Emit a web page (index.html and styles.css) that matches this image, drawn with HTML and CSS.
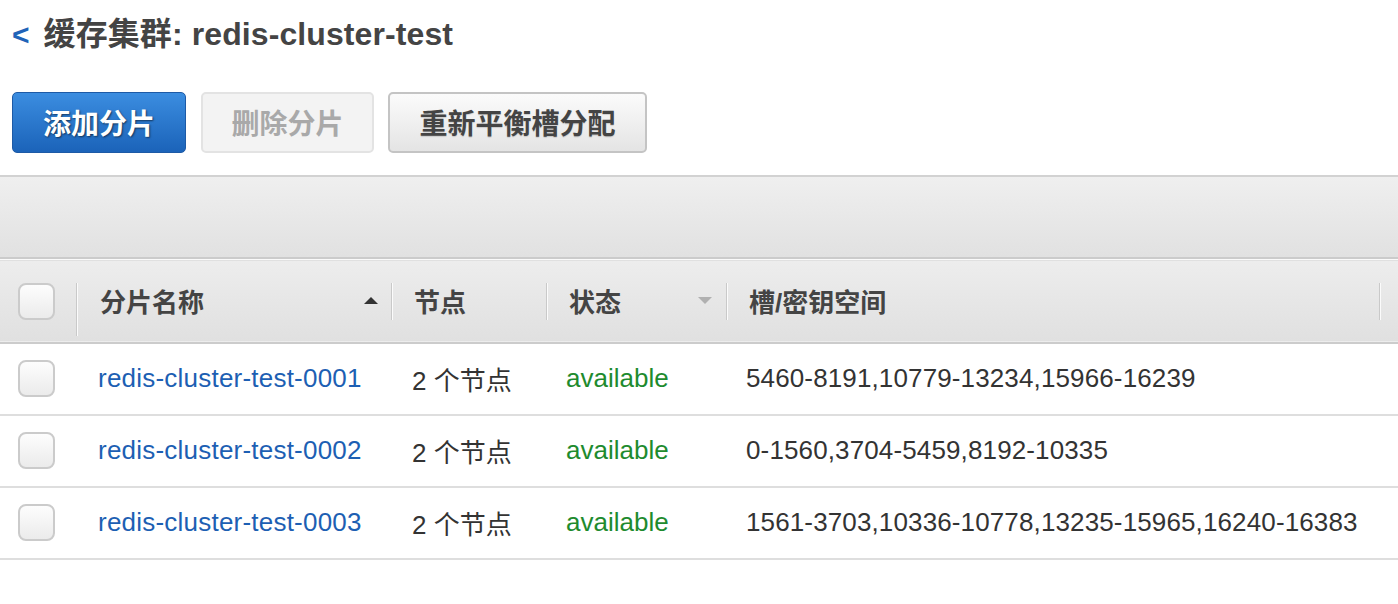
FILE: index.html
```html
<!DOCTYPE html>
<html lang="zh-CN">
<head>
<meta charset="utf-8">
<title>缓存集群: redis-cluster-test</title>
<link rel="stylesheet" href="styles.css">
</head>
<body>
<div class="title"><span class="back">&lt;</span><h1>缓存集群: redis-cluster-test</h1></div>
<div class="actions">
  <button class="btn btn-primary">添加分片</button>
  <button class="btn btn-disabled" disabled>删除分片</button>
  <button class="btn btn-default">重新平衡槽分配</button>
</div>
<div class="toolbar"></div>
<table class="grid">
  <colgroup>
    <col class="c-check"><col class="c-name"><col class="c-node"><col class="c-status"><col class="c-slots"><col class="c-end">
  </colgroup>
  <thead>
    <tr>
      <th class="th-check"><span class="cb"></span><span class="sep sep-long"></span></th>
      <th><div class="th-in"><span>分片名称</span><span class="arrow-up"></span></div><span class="sep"></span></th>
      <th><div class="th-in"><span>节点</span></div><span class="sep"></span></th>
      <th><div class="th-in"><span>状态</span><span class="arrow-down"></span></div><span class="sep"></span></th>
      <th><div class="th-in"><span>槽/密钥空间</span></div><span class="sep"></span></th>
      <th class="th-end"><span class="sep"></span></th>
    </tr>
  </thead>
  <tbody>
    <tr>
      <td class="td-check"><span class="cb"></span></td>
      <td class="link">redis-cluster-test-0001</td>
      <td>2 个节点</td>
      <td class="ok">available</td>
      <td class="slots">5460-8191,10779-13234,15966-16239</td>
      <td></td>
    </tr>
    <tr>
      <td class="td-check"><span class="cb"></span></td>
      <td class="link">redis-cluster-test-0002</td>
      <td>2 个节点</td>
      <td class="ok">available</td>
      <td class="slots">0-1560,3704-5459,8192-10335</td>
      <td></td>
    </tr>
    <tr>
      <td class="td-check"><span class="cb"></span></td>
      <td class="link">redis-cluster-test-0003</td>
      <td>2 个节点</td>
      <td class="ok">available</td>
      <td class="slots">1561-3703,10336-10778,13235-15965,16240-16383</td>
      <td></td>
    </tr>
  </tbody>
</table>
</body>
</html>
```
FILE: styles.css
```css
* { box-sizing: border-box; }
html, body { margin: 0; padding: 0; background: #fff; }
body {
  font-family: "Liberation Sans", "Noto Sans CJK SC", sans-serif;
  color: #444;
  width: 1398px;
  overflow: hidden;
}
.title {
  display: flex;
  align-items: center;
  height: 40px;
  margin-top: 14px;
  padding-left: 12px;
}
.back {
  color: #1f63b8;
  font-weight: bold;
  font-size: 30px;
  line-height: 40px;
  margin-right: 14px;
  margin-top: 2px;
}
.title h1 {
  margin: 0;
  font-size: 32px;
  line-height: 40px;
  font-weight: bold;
  color: #444;
  letter-spacing: 0.1px;
}
.actions {
  display: flex;
  gap: 15px;
  padding-left: 12px;
  margin-top: 38px;
  height: 61px;
}
.btn {
  font-family: inherit;
  font-size: 28px;
  font-weight: bold;
  height: 61px;
  line-height: 55px;
  padding: 3px 30px 0;
  border-radius: 5px;
  border: 1px solid #b7b7b7;
  cursor: pointer;
}
.btn-primary {
  color: #fff;
  background: linear-gradient(#3b8de0, #1b63b9);
  border-color: #1d5aa6;
  text-shadow: 1px 1px 2px rgba(0,0,0,0.55);
}
.btn-disabled {
  color: #a9a9a9;
  background: #f3f3f3;
  border: 2px solid #e3e3e3;
  width: 173px;
  padding: 3px 0 0;
}
.btn-default {
  color: #444;
  background: linear-gradient(#fbfbfb, #e4e4e4);
  border: 2px solid #c4c4c4;
  text-shadow: 0 1px 1px rgba(0,0,0,0.15);
  width: 259px;
  padding: 3px 0 0;
  margin-left: -1px;
}
.toolbar {
  margin-top: 22px;
  height: 84px;
  border-top: 2px solid #d2d2d2;
  border-bottom: 2px solid #cbcbcb;
  background: linear-gradient(#efefef, #e1e1e1);
}
.grid {
  width: 1398px;
  border-collapse: collapse;
  table-layout: fixed;
}
.c-check { width: 77px; }
.c-name { width: 314px; }
.c-node { width: 155px; }
.c-status { width: 180px; }
.c-slots { width: 652px; }
.c-end { width: 20px; }
thead tr {
  height: 83px;
  background: linear-gradient(#ededed, #e0e0e0);
  border-top: 1px solid #fafafa;
  border-bottom: 2px solid #cccccc;
}
th {
  position: relative;
  padding: 0 0 0 23px;
  font-size: 26px;
  font-weight: bold;
  color: #444;
  text-align: left;
  vertical-align: middle;
}
.th-in {
  display: flex;
  align-items: center;
  height: 36px;
  margin-top: 0;
}
.th-check { padding-left: 18px; }
.th-check .cb { margin-top: 1px; }
.sep {
  position: absolute;
  left: 0;
  top: 23px;
  width: 2px;
  height: 37px;
  border-left: 1px solid #c9c9c9;
  border-right: 1px solid #fbfbfb;
}
.th-check .sep { left: auto; right: -1px; }
.sep-long { height: 53px; }
.th-end .sep { left: 1px; }
.th-check + th .sep { display: none; }
.arrow-up {
  margin-left: auto;
  margin-right: 13px;
  width: 0; height: 0;
  border-left: 7px solid transparent;
  border-right: 7px solid transparent;
  border-bottom: 7px solid #333;
}
.arrow-down {
  margin-left: auto;
  margin-right: 14px;
  width: 0; height: 0;
  border-left: 7px solid transparent;
  border-right: 7px solid transparent;
  border-top: 7px solid #b0b0b0;
}
.cb {
  display: block;
  width: 37px;
  height: 37px;
  border: 2px solid #cbcbcb;
  border-radius: 8px;
  background: linear-gradient(#fdfdfd, #ebebeb);
}
tbody tr {
  height: 72px;
  border-bottom: 2px solid #dedede;
}
td {
  padding: 0 0 0 21px;
  font-size: 26px;
  color: #333;
  vertical-align: middle;
  white-space: nowrap;
}
td.td-check { padding-left: 18px; }
td.link { color: #1d5fb3; letter-spacing: 0.22px; }
td.ok { color: #1e8b2e; padding-left: 20px; }
td.slots { padding-left: 20px; letter-spacing: 0.13px; }
```
